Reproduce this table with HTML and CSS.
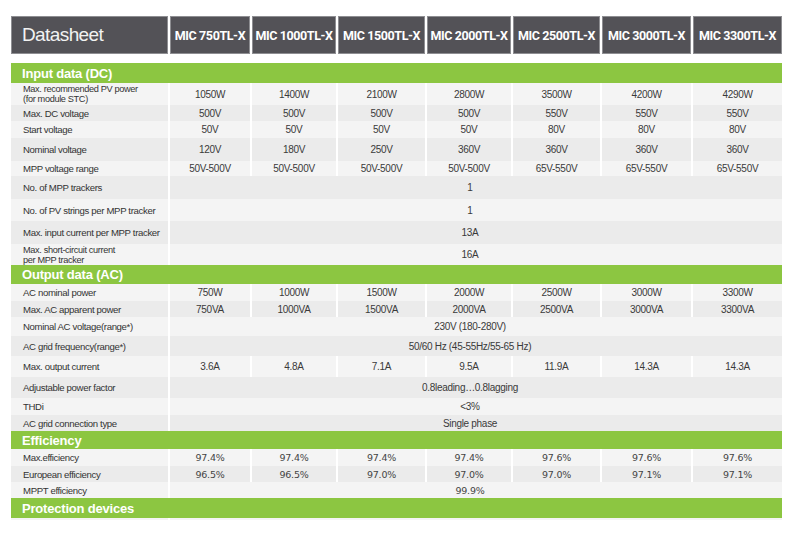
FILE: index.html
```html
<!DOCTYPE html>
<html>
<head>
<meta charset="utf-8">
<link rel="stylesheet" href="styles.css">
</head>
<body>
<div class="sheet">
  <div class="row head">
    <div class="hcell title">Datasheet</div>
    <div class="hcell">MIC 750TL-X</div>
    <div class="hcell">MIC 1000TL-X</div>
    <div class="hcell">MIC 1500TL-X</div>
    <div class="hcell">MIC 2000TL-X</div>
    <div class="hcell">MIC 2500TL-X</div>
    <div class="hcell">MIC 3000TL-X</div>
    <div class="hcell">MIC 3300TL-X</div>
  </div>

  <div class="section s-input">Input data (DC)</div>
  <div class="row light h22"><div class="lbl two">Max. recommended PV power<br>(for module STC)</div><div>1050W</div><div>1400W</div><div>2100W</div><div>2800W</div><div>3500W</div><div>4200W</div><div>4290W</div></div>
  <div class="row dark h16"><div class="lbl">Max. DC voltage</div><div>500V</div><div>500V</div><div>500V</div><div>500V</div><div>550V</div><div>550V</div><div>550V</div></div>
  <div class="row light h17"><div class="lbl">Start voltage</div><div>50V</div><div>50V</div><div>50V</div><div>50V</div><div>80V</div><div>80V</div><div>80V</div></div>
  <div class="row dark h23"><div class="lbl">Nominal voltage</div><div>120V</div><div>180V</div><div>250V</div><div>360V</div><div>360V</div><div>360V</div><div>360V</div></div>
  <div class="row light h15"><div class="lbl">MPP voltage range</div><div>50V-500V</div><div>50V-500V</div><div>50V-500V</div><div>50V-500V</div><div>65V-550V</div><div>65V-550V</div><div>65V-550V</div></div>
  <div class="row dark h23"><div class="lbl">No. of MPP trackers</div><div class="span">1</div></div>
  <div class="row light h22"><div class="lbl">No. of PV strings per MPP tracker</div><div class="span">1</div></div>
  <div class="row dark h23"><div class="lbl">Max. input current per MPP tracker</div><div class="span">13A</div></div>
  <div class="row light h21"><div class="lbl two">Max. short-circuit current<br>per MPP tracker</div><div class="span">16A</div></div>

  <div class="section s-output">Output data (AC)</div>
  <div class="row light h17"><div class="lbl">AC nominal power</div><div>750W</div><div>1000W</div><div>1500W</div><div>2000W</div><div>2500W</div><div>3000W</div><div>3300W</div></div>
  <div class="row dark h16"><div class="lbl">Max. AC apparent power</div><div>750VA</div><div>1000VA</div><div>1500VA</div><div>2000VA</div><div>2500VA</div><div>3000VA</div><div>3300VA</div></div>
  <div class="row light h19"><div class="lbl">Nominal AC voltage(range*)</div><div class="span">230V (180-280V)</div></div>
  <div class="row dark h20"><div class="lbl">AC grid frequency(range*)</div><div class="span">50/60 Hz (45-55Hz/55-65 Hz)</div></div>
  <div class="row light h21"><div class="lbl">Max. output current</div><div>3.6A</div><div>4.8A</div><div>7.1A</div><div>9.5A</div><div>11.9A</div><div>14.3A</div><div>14.3A</div></div>
  <div class="row dark h21"><div class="lbl">Adjustable power factor</div><div class="span">0.8leading…0.8lagging</div></div>
  <div class="row light h17"><div class="lbl">THDi</div><div class="span">&lt;3%</div></div>
  <div class="row dark h16"><div class="lbl">AC grid connection type</div><div class="span">Single phase</div></div>

  <div class="section s-eff">Efficiency</div>
  <div class="row light h17 eff"><div class="lbl">Max.efficiency</div><div>97.4%</div><div>97.4%</div><div>97.4%</div><div>97.4%</div><div>97.6%</div><div>97.6%</div><div>97.6%</div></div>
  <div class="row dark h16 eff"><div class="lbl">European efficiency</div><div>96.5%</div><div>96.5%</div><div>97.0%</div><div>97.0%</div><div>97.0%</div><div>97.1%</div><div>97.1%</div></div>
  <div class="row light h16 eff"><div class="lbl">MPPT efficiency</div><div class="span">99.9%</div></div>

  <div class="section s-prot">Protection devices</div>
  <div class="row light h2"><div class="lbl"></div><div class="span"></div></div>
</div>
</body>
</html>
```

FILE: styles.css
```css
html, body {
  margin: 0;
  padding: 0;
  background: #ffffff;
}

body {
  font-family: "Liberation Sans", Arial, sans-serif;
  color: #3a3a3a;
}

.sheet {
  width: 771px;
  margin-left: 11px;
  padding-top: 16px;
}

.row {
  display: grid;
  grid-template-columns: 157px 80px 84px 87px 84px 87px 89px 89px;
  column-gap: 2px;
}

.row > div {
  display: flex;
  align-items: center;
  justify-content: center;
  font-size: 10px;
  letter-spacing: -0.3px;
  white-space: nowrap;
}

.row > .lbl {
  justify-content: flex-start;
  padding-left: 12px;
  font-size: 9.6px;
  letter-spacing: -0.35px;
  color: #333;
}

.row > .lbl.two {
  line-height: 10px;
  font-size: 9.2px;
}

.row > .span {
  grid-column: 2 / -1;
  padding-right: 12px;
}

.light > div { background: #f4f4f4; }
.dark > div { background: #ebebeb; }

.h2 { height: 2px; }
.h15 { height: 15px; }
.h16 { height: 16px; }
.h17 { height: 17px; }
.h19 { height: 19px; }
.h20 { height: 20px; }
.h21 { height: 21px; }
.h22 { height: 22px; }
.h23 { height: 23px; }

.eff > div:not(.lbl) {
  font-family: "DejaVu Sans", sans-serif;
  font-size: 9.5px;
  letter-spacing: -0.2px;
  color: #444;
}

.head {
  height: 38px;
  margin-bottom: 9px;
}

.head > .hcell {
  background: #535257;
  border: 1px solid #8e8e92;
  color: #ffffff;
  font-family: Roboto, "Liberation Sans", sans-serif;
  font-weight: 700;
  font-size: 12.5px;
  letter-spacing: -0.4px;
}

.head > .hcell.title {
  justify-content: flex-start;
  padding-left: 10px;
  font-family: "Liberation Sans", sans-serif;
  font-weight: 400;
  font-size: 19px;
  letter-spacing: -0.6px;
  color: #f2f2f2;
}

.section {
  background: #8cc641;
  color: #ffffff;
  font-family: "Liberation Sans", Arial, sans-serif;
  font-weight: 700;
  font-size: 13px;
  letter-spacing: -0.2px;
  padding-left: 11px;
  display: flex;
  align-items: center;
}

.s-input { height: 20px; }
.s-output { height: 19px; }
.s-eff { height: 18px; }
.s-prot { height: 20px; }
```
